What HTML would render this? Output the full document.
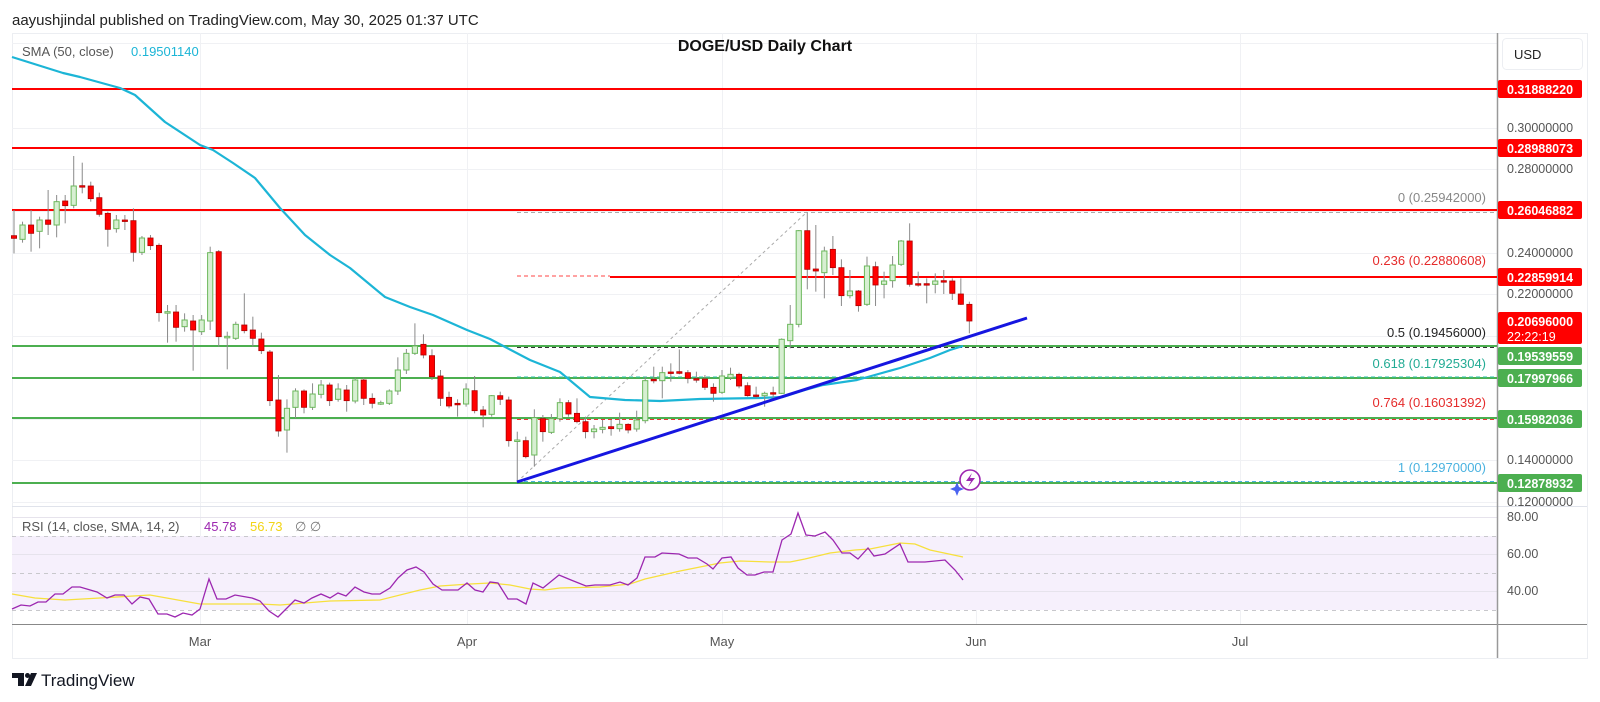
<!DOCTYPE html>
<html><head><meta charset="utf-8"><style>
html,body{margin:0;padding:0;background:#fff;width:1600px;height:702px;overflow:hidden}
svg text{font-family:"Liberation Sans",sans-serif}
</style></head><body>
<svg id="s" width="1600" height="702" xmlns="http://www.w3.org/2000/svg">
<rect width="1600" height="702" fill="#fff"/>
<text x="12" y="25" font-size="15" fill="#222">aayushjindal published on TradingView.com, May 30, 2025 01:37 UTC</text>
<rect x="12.5" y="33.5" width="1575" height="625" fill="none" stroke="#eceef2"/>
<g stroke="#f0f1f4" stroke-width="1">
<line x1="12" x2="1497" y1="43.5" y2="43.5"/>
<line x1="12" x2="1497" y1="128.5" y2="128.5"/><line x1="12" x2="1497" y1="169.5" y2="169.5"/>
<line x1="12" x2="1497" y1="211.5" y2="211.5"/><line x1="12" x2="1497" y1="253.5" y2="253.5"/>
<line x1="12" x2="1497" y1="294.5" y2="294.5"/><line x1="12" x2="1497" y1="336.5" y2="336.5"/>
<line x1="12" x2="1497" y1="377.5" y2="377.5"/><line x1="12" x2="1497" y1="419.5" y2="419.5"/>
<line x1="12" x2="1497" y1="460.5" y2="460.5"/><line x1="12" x2="1497" y1="502.5" y2="502.5"/>
<line x1="200.5" x2="200.5" y1="33" y2="624"/><line x1="467.5" x2="467.5" y1="33" y2="624"/>
<line x1="722.5" x2="722.5" y1="33" y2="624"/><line x1="976.5" x2="976.5" y1="33" y2="624"/>
<line x1="1240.5" x2="1240.5" y1="33" y2="624"/>
</g>
<line x1="12" x2="1587" y1="506.5" y2="506.5" stroke="#e0e3eb"/>
<rect x="12" y="536" width="1485" height="74" fill="#f6f0fc"/>
<g stroke="#e6e3ec"><line x1="12" x2="1497" y1="517.5" y2="517.5"/><line x1="12" x2="1497" y1="554.5" y2="554.5"/><line x1="12" x2="1497" y1="591.5" y2="591.5"/></g>
<g stroke="#c8c8cc" stroke-dasharray="4,4"><line x1="12" x2="1497" y1="536.5" y2="536.5"/><line x1="12" x2="1497" y1="573.5" y2="573.5"/><line x1="12" x2="1497" y1="610.5" y2="610.5"/></g>
<polyline fill="none" stroke="#f7e03c" stroke-width="1.3" points="12,594 35,598 65,600 100,598 150,595 200,604 260,604 280,605 330,601 380,600 420,590 440,586 470,584 490,583 510,585 530,589 545,590 560,588 600,587 630,584 645,579 680,571 720,563 740,561 770,562 790,562 805,559 830,553 855,550 870,549 900,543 915,544 930,550 963,557"/>
<polyline fill="none" stroke="#9c27b0" stroke-width="1.3" points="12,609 21,605 30,606 38,602 46,602 55,594 63,594 72,587 80,587 97,592 107,598 115,595 124,595 132,604 140,597 149,599 158,614 167,614 175,617 183,613 192,615 200,609 209,579 217,599 226,599 235,595 252,598 260,601 269,611 278,617 287,608 295,600 304,603 312,598 321,594 330,598 338,593 346,596 355,587 364,592 372,594 380,594 390,588 398,578 407,570 416,567 424,572 433,584 442,590 450,590 458,590 467,583 475,590 483,592 490,582 498,583 508,599 517,599 526,604 533,583 543,588 559,575 571,580 586,586 595,585 610,585 620,582 628,585 637,578 645,557 655,557 662,553 679,554 688,558 697,558 707,564 713,569 722,558 731,557 738,568 747,575 755,575 764,572 773,572 782,540 791,534 798,513 806,535 815,536 825,532 833,540 842,553 850,553 858,559 868,548 874,556 885,554 900,544 908,562 925,562 945,560 955,570 963,580"/>
<text x="22" y="531" font-size="13" fill="#555">RSI (14, close, SMA, 14, 2)</text>
<text x="204" y="531" font-size="13" fill="#9c27b0">45.78</text>
<text x="250" y="531" font-size="13" fill="#f2d415">56.73</text>
<text x="295" y="531" font-size="13" fill="#777">∅  ∅</text>
<line x1="12" x2="1587" y1="624.5" y2="624.5" stroke="#888"/>
<line x1="1497.5" x2="1497.5" y1="33" y2="658" stroke="#999" stroke-width="1.5"/>
<g font-size="13" fill="#555" text-anchor="middle"><text x="200" y="646">Mar</text><text x="467" y="646">Apr</text><text x="722" y="646">May</text><text x="976" y="646">Jun</text><text x="1240" y="646">Jul</text></g>
<line x1="517" y1="482" x2="807" y2="212" stroke="#aaa" stroke-dasharray="3,3"/>
<line x1="517" x2="1497" y1="212.5" y2="212.5" stroke="#aaa" stroke-dasharray="4,3"/>
<line x1="517" x2="610" y1="276" y2="276" stroke="#f44" stroke-dasharray="4,3"/>
<line x1="517" x2="1497" y1="347.5" y2="347.5" stroke="#333" stroke-dasharray="4,3"/>
<line x1="517" x2="1497" y1="419.5" y2="419.5" stroke="#e33" stroke-dasharray="4,3"/>
<g stroke="#ff0000" stroke-width="2"><line x1="12" x2="1497" y1="89" y2="89"/><line x1="12" x2="1497" y1="148" y2="148"/><line x1="12" x2="1497" y1="210" y2="210"/><line x1="610" x2="1497" y1="277" y2="277"/></g>
<g stroke="#4caf50" stroke-width="2"><line x1="12" x2="1497" y1="346" y2="346"/><line x1="12" x2="1497" y1="378" y2="378"/><line x1="12" x2="1497" y1="418" y2="418"/><line x1="12" x2="1497" y1="483" y2="483"/></g>
<line x1="517" x2="1497" y1="481.5" y2="481.5" stroke="#4ab2e0" stroke-dasharray="4,3"/>
<line x1="517" x2="1497" y1="377" y2="377" stroke="#2bc1a8" stroke-dasharray="4,3" stroke-width="1"/>
<polyline fill="none" stroke="#1cb5d6" stroke-width="2.2" stroke-linejoin="round" points="12,57 63,73 80,77 120,88 135,95 165,122 200,145 213,150 233,163 255,178 280,208 305,235 330,255 350,268 385,297 410,307 433,315 467,330 490,339 530,360 560,372 590,397 625,400 660,401 700,399 760,398 783,397 805,390 823,385 857,380 900,368 930,358 950,350 963,346"/>
<g id="c"></g>
<line x1="517" y1="482" x2="1027" y2="318" stroke="#1616e0" stroke-width="3"/>
<circle cx="970" cy="480" r="10" fill="#fff" stroke="#9c27b0" stroke-width="1.6"/>
<path d="M972,473 L966,481 L971,481 L968,487 L975,478 L970,478 Z" fill="#9c27b0"/>
<path d="M957,482 L959,487 L964,489 L959,491 L957,496 L955,491 L950,489 L955,487 Z" fill="#4a63f0"/>
<text x="765" y="51" font-size="16" font-weight="bold" fill="#111" text-anchor="middle">DOGE/USD Daily Chart</text>
<text x="22" y="56" font-size="13" fill="#555">SMA (50, close)</text>
<text x="131" y="56" font-size="13" fill="#1cb5d6">0.19501140</text>
<g font-size="13" text-anchor="end">
<text x="1486" y="202" fill="#888">0 (0.25942000)</text>
<text x="1486" y="265" fill="#e52b2b">0.236 (0.22880608)</text>
<text x="1486" y="337" fill="#222">0.5 (0.19456000)</text>
<text x="1486" y="368" fill="#22ab94">0.618 (0.17925304)</text>
<text x="1486" y="407" fill="#e52b2b">0.764 (0.16031392)</text>
<text x="1486" y="472" fill="#4ab2e0">1 (0.12970000)</text>
</g>
<rect x="1502.5" y="38.5" width="80" height="31" rx="4" fill="#fff" stroke="#eceef2"/>
<text x="1514" y="59" font-size="13" fill="#222">USD</text>
<g font-size="12.5" fill="#555"><text x="1507" y="132">0.30000000</text><text x="1507" y="173">0.28000000</text><text x="1507" y="257">0.24000000</text><text x="1507" y="298">0.22000000</text><text x="1507" y="464">0.14000000</text><text x="1507" y="506">0.12000000</text><text x="1507" y="521">80.00</text><text x="1507" y="558">60.00</text><text x="1507" y="595">40.00</text></g>
<g font-size="12.5" font-weight="bold" fill="#fff">
<rect x="1498" y="80" width="84" height="18" rx="2" fill="#ff0000"/><text x="1507" y="94">0.31888220</text>
<rect x="1498" y="139" width="84" height="18" rx="2" fill="#ff0000"/><text x="1507" y="153">0.28988073</text>
<rect x="1498" y="201" width="84" height="18" rx="2" fill="#ff0000"/><text x="1507" y="215">0.26046882</text>
<rect x="1498" y="268" width="84" height="18" rx="2" fill="#ff0000"/><text x="1507" y="282">0.22859914</text>
<rect x="1498" y="312" width="84" height="32" rx="2" fill="#ff0000"/><text x="1507" y="326">0.20696000</text><text x="1507" y="341" font-weight="normal">22:22:19</text>
<rect x="1498" y="347" width="84" height="18" rx="2" fill="#4caf50"/><text x="1507" y="361">0.19539559</text>
<rect x="1498" y="369" width="84" height="18" rx="2" fill="#4caf50"/><text x="1507" y="383">0.17997966</text>
<rect x="1498" y="410" width="84" height="18" rx="2" fill="#4caf50"/><text x="1507" y="424">0.15982036</text>
<rect x="1498" y="474" width="84" height="18" rx="2" fill="#4caf50"/><text x="1507" y="488">0.12878932</text>
</g>
<path d="M12,673 H24 V686 H18 V678 H12 Z" fill="#131722"/>
<circle cx="27.5" cy="675.5" r="2.5" fill="#131722"/>
<path d="M31,673 H37 L31,686 H25 Z" fill="#131722"/>
<text x="41" y="686" font-size="17" fill="#131722">TradingView</text>
</svg>
<script>
var A=[[257,265,180,310,'r'],[225,268,215,278,'g'],[225,250,180,305,'r'],[210,244,200,295,'g'],[210,223,120,255,'r'],[155,225,135,262,'g'],[153,167,135,220,'r'],[108,166,18,175,'g'],[107,109,38,130,'r'],[108,146,95,155,'r'],[143,193,128,200,'r'],[190,238,185,290,'r'],[210,236,195,248,'g'],[210,212,195,240,'r'],[212,307,175,335,'r'],[264,307,258,315,'g'],[264,287,255,300,'r'],[286,488,280,515,'r'],[485,487,465,578,'g'],[486,532,465,575,'r'],[510,530,490,545,'g'],[513,540,495,662,'r'],[510,545,495,555,'g'],[308,513,290,540,'g'],[305,560,300,590,'r'],[559,562,545,658,'g'],[523,565,515,570,'g'],[525,542,430,550,'r'],[540,565,500,590,'r'],[567,602,548,612,'r'],[606,752,600,768,'r'],[750,843,675,860,'r'],[775,840,748,908,'g'],[723,772,715,805,'g'],[723,772,718,790,'r'],[732,772,700,780,'g'],[705,733,690,745,'g'],[705,752,698,768,'r'],[717,748,700,755,'g'],[720,752,705,785,'r'],[690,753,683,760,'g'],[690,745,683,765,'r'],[745,760,730,775,'r'],[758,760,752,765,'g'],[723,760,718,765,'g'],[660,723,622,735,'g'],[610,660,597,672,'g'],[588,610,520,615,'g'],[583,615,553,625,'r'],[617,680,598,690,'r'],[678,745,660,768,'r'],[742,768,725,775,'r'],[760,763,748,800,'r'],[717,762,700,770,'g'],[722,782,678,790,'r'],[780,795,768,832,'r'],[737,793,735,800,'g']];
var B=[[617,628,605,645,'r'],[630,752,620,770,'r'],[750,752,725,875,'g'],[752,800,740,805,'r'],[683,795,658,830,'g'],[686,725,675,755,'r'],[686,727,672,732,'g'],[638,686,625,695,'g'],[638,672,630,680,'r'],[670,695,625,700,'r'],[695,725,680,745,'r'],[717,725,705,745,'g'],[712,718,690,730,'g'],[710,716,690,737,'r'],[703,716,668,725,'g'],[703,720,700,730,'r'],[690,717,662,725,'g'],[572,692,560,700,'g'],[568,572,530,580,'r'],[548,572,530,625,'g'],[546,549,520,575,'r'],[545,550,478,553,'r'],[548,565,540,580,'r'],[566,568,545,578,'r'],[567,592,555,600,'r'],[592,610,580,635,'r'],[558,607,540,612,'g'],[553,563,533,570,'g'],[553,588,548,595,'r'],[587,617,577,620,'r'],[615,618,590,625,'r'],[610,617,605,650,'g'],[608,611,590,625,'r'],[448,610,445,612,'g'],[403,452,345,475,'g'],[122,403,120,412,'g'],[122,238,68,298,'r'],[237,243,105,305,'r'],[183,248,170,325,'g'],[178,233,138,255,'r'],[233,317,208,348,'r'],[303,317,240,325,'g'],[303,347,300,365,'r'],[228,343,200,348,'g'],[230,285,215,348,'r'],[273,283,245,325,'g'],[225,272,198,293,'g'],[153,223,150,228,'g'],[153,283,100,290,'r'],[281,284,245,290,'r'],[281,284,265,340,'r'],[273,283,250,310,'g'],[272,275,240,312,'r'],[273,310,265,330,'r'],[312,343,265,345,'r'],[343,393,335,430,'r']];
var h='';
function add(d,i,off){var x=14+8.53*i;var t=off+d[0]/3,b=off+d[1]/3,hi=off+d[2]/3,lo=off+d[3]/3;
h+='<line x1="'+x+'" x2="'+x+'" y1="'+hi+'" y2="'+lo+'" stroke="#8a8a8a" stroke-width="1"/>';
var hh=Math.max(1.5,b-t);
if(d[4]=='g')h+='<rect x="'+(x-2.6)+'" y="'+t+'" width="5.2" height="'+hh+'" fill="#d7efd2" stroke="#6cb85c" stroke-width="1"/>';
else h+='<rect x="'+(x-2.6)+'" y="'+t+'" width="5.2" height="'+hh+'" fill="#ff0000" stroke="#b00000" stroke-width="0.8"/>';}
A.forEach(function(d,i){add(d,i,150)});
B.forEach(function(d,i){add(d,i+57,190)});
document.getElementById('c').innerHTML=h;
</script>
</body></html>
